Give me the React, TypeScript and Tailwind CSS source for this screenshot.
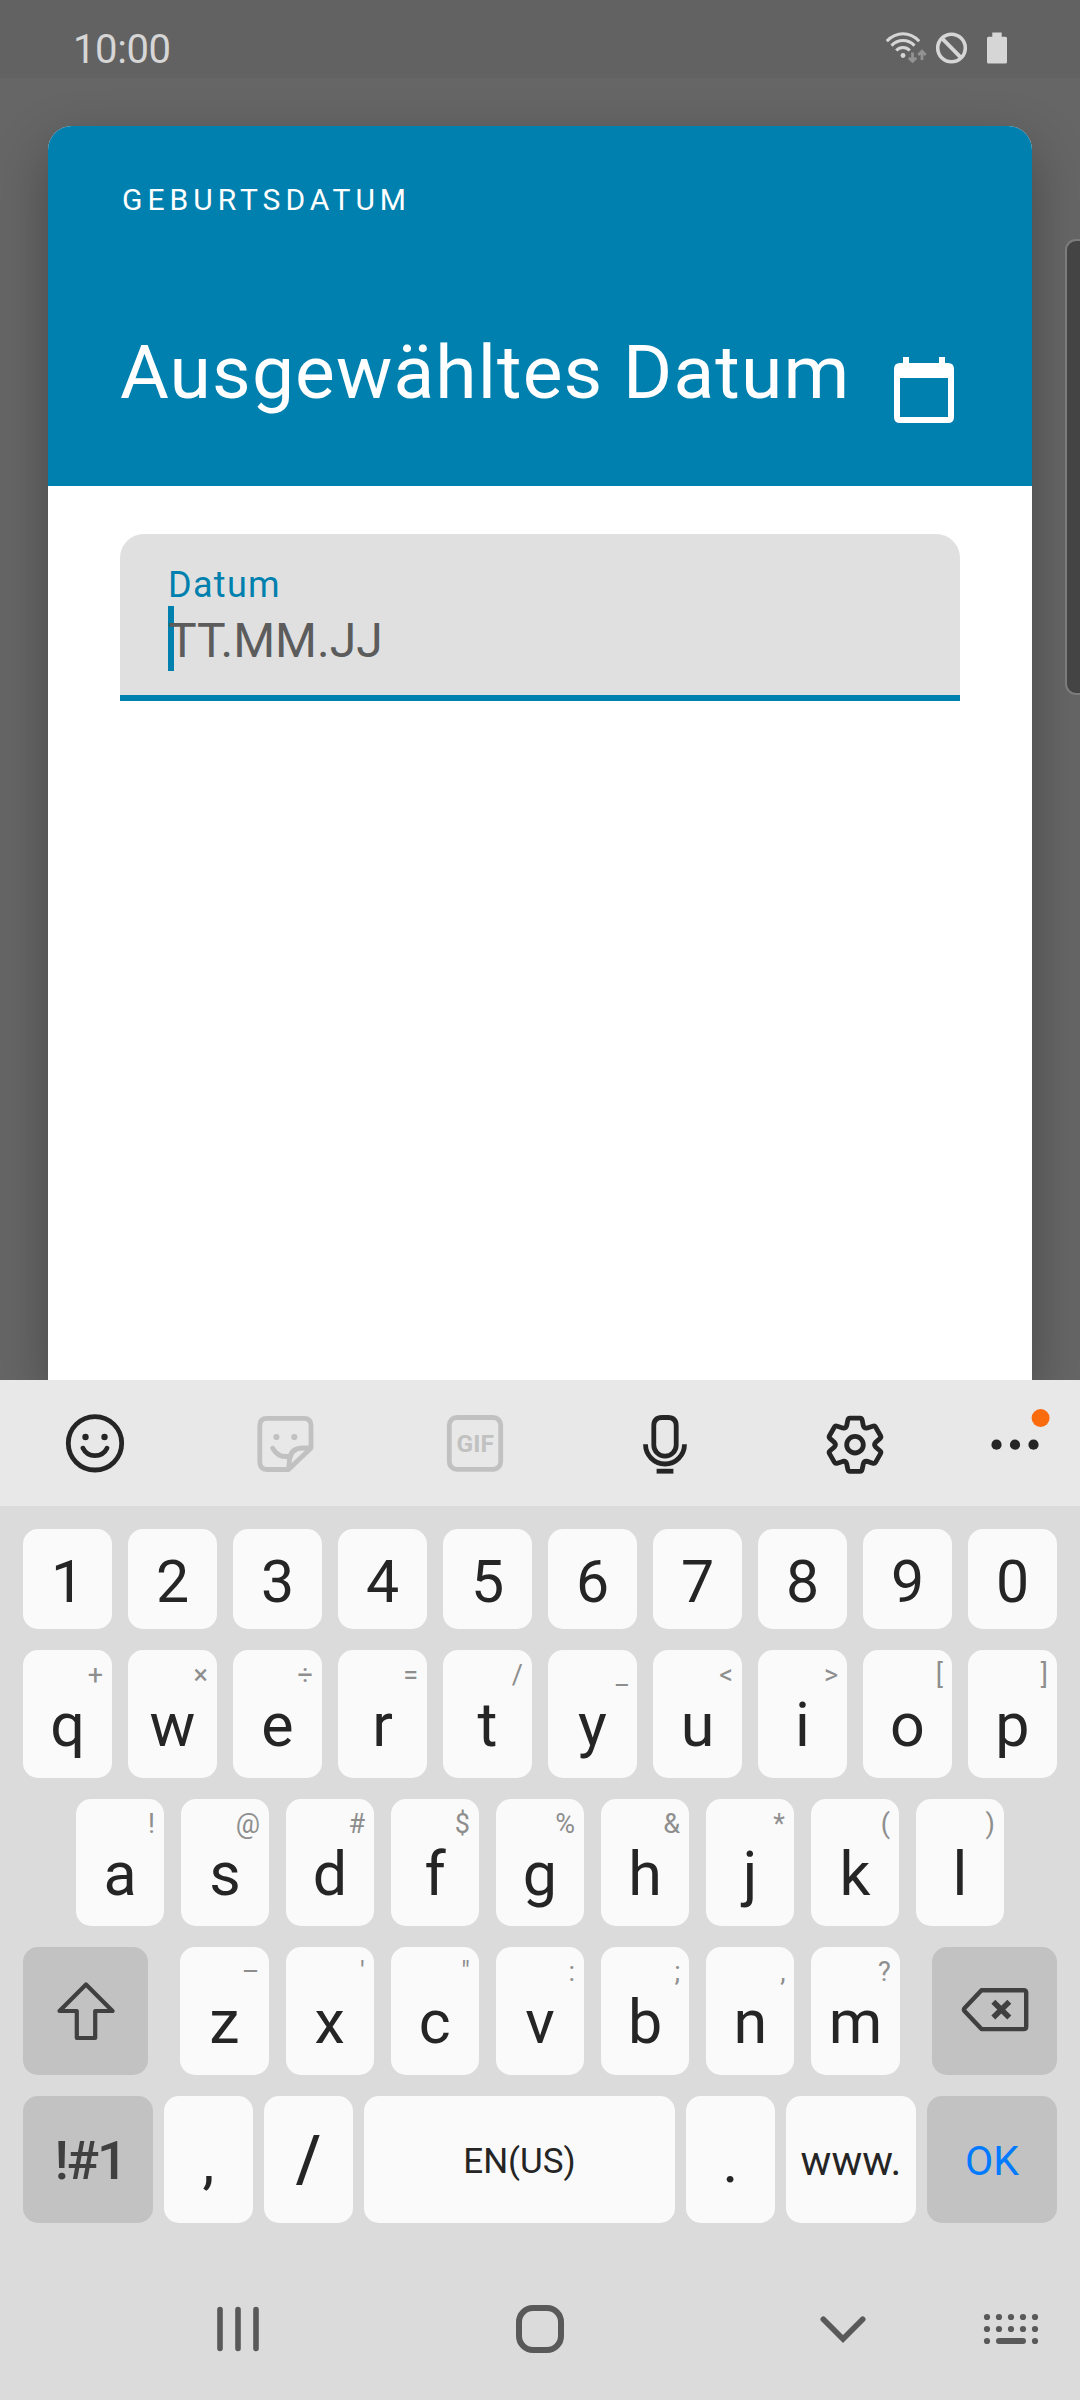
import type { ReactNode } from 'react';

const numberRow = ['1', '2', '3', '4', '5', '6', '7', '8', '9', '0'];
const topRow = [
  ['q', '+'], ['w', '×'], ['e', '÷'], ['r', '='], ['t', '/'],
  ['y', '_'], ['u', '<'], ['i', '>'], ['o', '['], ['p', ']'],
];
const homeRow = [
  ['a', '!'], ['s', '@'], ['d', '#'], ['f', '$'], ['g', '%'],
  ['h', '&'], ['j', '*'], ['k', '('], ['l', ')'],
];
const lowerRow = [
  ['z', '–'], ['x', "'"], ['c', '"'], ['v', ':'], ['b', ';'], ['n', ','], ['m', '?'],
];

// Icons are drawn around the origin so that they centre in their cell.
function Icon({ children, className = '' }: { children: ReactNode; className?: string }) {
  return (
    <svg
      width="80"
      height="80"
      viewBox="-40 -40 80 80"
      fill="none"
      stroke="currentColor"
      strokeWidth="4.8"
      strokeLinejoin="round"
      className={'shrink-0 ' + className}
    >
      {children}
    </svg>
  );
}

function gearPath() {
  const turn = (x: number, y: number, deg: number) => {
    const a = (deg * Math.PI) / 180;
    return `${(x * Math.cos(a) - y * Math.sin(a)).toFixed(2)} ${(x * Math.sin(a) + y * Math.cos(a)).toFixed(2)}`;
  };
  const teeth = [0, 60, 120, 180, 240, 300].map(
    (d) =>
      `L${turn(-7.2, -24.6, d)} Q${turn(-6.8, -26.6, d)} ${turn(-5, -26.6, d)} L${turn(5, -26.6, d)} Q${turn(6.8, -26.6, d)} ${turn(7.2, -24.6, d)} L${turn(8.3, -19, d)} Q${turn(9.3, -16.1, d)} ${turn(12.3, -16.7, d)}`,
  );
  return 'M' + teeth.join(' ').slice(1) + 'Z';
}

function LetterKey({ label, hint, width }: { label: string; hint: string; width: string }) {
  return (
    <div className={'flex h-full flex-col rounded-[15px] bg-[#fafafa] pt-[10px] ' + width}>
      <span className="h-[30px] pr-[9px] text-right text-[27px] leading-[30px] text-[#8e8e8e]">{hint}</span>
      <span className="mt-[5px] h-[60px] text-center text-[61px] leading-[60px] text-[#252525]">{label}</span>
    </div>
  );
}

function StatusBar() {
  return (
    <div className="flex h-[78px] items-start bg-[#626262] text-[#d6d6d6]">
      <span className="ml-[73px] mt-[20px] text-[40px] leading-[60px] tracking-[-0.4px]">10:00</span>
      <svg className="ml-auto mr-[73px] mt-[32px]" width="121" height="32" viewBox="886 32 121 32" fill="none" stroke="currentColor">
        <g strokeWidth="3">
          <path d="M886.8 41.2Q894 33.8 903 33.8T919.2 41.2" />
          <path d="M891.5 45.6Q896.5 40.6 903 40.6T914.5 45.6" />
          <path d="M896.2 50.6Q899 47.6 903 47.6T909.8 50.6" />
        </g>
        <circle cx="903" cy="55.5" r="2.4" fill="currentColor" stroke="none" />
        <g stroke="#929292" strokeWidth="2.8">
          <path d="M912.5 52.5V61M908.8 57.8L912.5 61.4L916.2 57.8M922 60V51.5M918.3 55L922 51.2L925.7 55" />
        </g>
        <circle cx="951.5" cy="48" r="13.8" strokeWidth="3.6" />
        <path d="M941.8 38.2L961.2 57.8" strokeWidth="3.8" />
        <path d="M992.3 32.4h9.4v4.4h3.8q1.5 0 1.5 1.5v23.7q0 1.5-1.5 1.5h-17q-1.500 0-1.500-1.500V38.300q0-1.500 1.500-1.500h3.800z" fill="currentColor" stroke="none" />
      </svg>
    </div>
  );
}

function DateDialog() {
  return (
    <div className="mx-[48px] mt-[48px] h-[1254px] rounded-t-[24px] bg-white shadow-[0_20px_54px_rgba(0,0,0,0.3)]">
      <div className="flex h-[360px] flex-col rounded-t-[24px] bg-[#0080ae] px-[72px] pt-[54px] text-white">
        <span className="ml-[2px] h-[40px] text-[30px] leading-[40px] tracking-[5px]">GEBURTSDATUM</span>
        <div className="mt-[102px] flex h-[100px] items-start justify-between">
          <span className="whitespace-nowrap text-[75px] leading-[100px] tracking-[1.100px]">Ausgewähltes Datum</span>
          <svg className="mr-[6px] mt-[35px]" width="60" height="66" viewBox="0 0 60 66" fill="white">
            <path fillRule="evenodd" d="M9 0H15V6H45V0H51V6H54Q60 6 60 12V60Q60 66 54 66H6Q0 66 0 60V12Q0 6 6 6H9ZM6 21V60H54V21Z" />
          </svg>
        </div>
      </div>
      <div className="mx-[72px] mt-[48px] flex h-[167px] flex-col rounded-t-[24px] border-b-[6px] border-[#0080ae] bg-[#e0e0e0] pl-[48px]">
        <span className="mt-[31px] h-[40px] text-[36px] leading-[40px] tracking-[1.300px] text-[#0080ae]">Datum</span>
        <div className="mt-[1px] flex h-[65px] w-[300px] border-l-[6px] border-[#0080ae]">
          <span className="-ml-[6px] mt-[3px] text-[48px] leading-[64px] text-[#5c5c5c]">TT.MM.JJ</span>
        </div>
      </div>
    </div>
  );
}

function Toolbar() {
  return (
    <div className="flex h-[126px] items-center bg-[#e8e8e8] text-[#252525]">
      <div className="flex w-[190px] justify-center">
        <Icon>
          <circle cx="0" cy="0.3" r="26.7" />
          <circle cx="-9.500" cy="-6" r="3.200" fill="currentColor" stroke="none" />
          <circle cx="9.500" cy="-6" r="3.200" fill="currentColor" stroke="none" />
          <path d="M-12 5.200A13.400 13.400 0 0 0 12 5.200" strokeLinecap="round" />
        </Icon>
      </div>
      <div className="flex w-[190px] justify-center">
        <Icon className="text-[#c1c1c1]">
          <path d="M26 5V-17.500Q26-24.700 19-24.700H-18Q-25.200-24.700-25.200-17.500V19Q-25.200 26.500-18 26.500H3.500L26 5H18Q5.500 5 4.500 17L3.500 26.500" />
          <circle cx="-8.600" cy="-6" r="3.100" fill="currentColor" stroke="none" />
          <circle cx="9.300" cy="-6" r="3.100" fill="currentColor" stroke="none" />
          <path d="M-12.300 5.200Q-7.500 13.500 0.500 13.500H5.500" strokeLinecap="round" />
        </Icon>
      </div>
      <div className="flex w-[190px] justify-center">
        <Icon className="text-[#c1c1c1]">
          <rect x="-25.700" y="-25.500" width="51.400" height="51.800" rx="7.500" />
          <text x="0.200" y="9.300" textAnchor="middle" fill="currentColor" stroke="none" fontSize="24.500" fontWeight="700">GIF</text>
        </Icon>
      </div>
      <div className="flex w-[190px] justify-center">
        <Icon>
          <path d="M-11.200-17.500Q-11.200-25.500-3-25.500H3Q11.200-25.500 11.200-17.500V2A11.200 11.200 0 0 1-11.200 2Z" />
          <path d="M-19.500 1.300A19.500 19.700 0 0 0 19.500 1.300" />
          <path d="M-8.400 28.200H8.400" />
        </Icon>
      </div>
      <div className="flex w-[190px] justify-center">
        <Icon>
          <g transform="translate(0 1.700)">
            <path d={gearPath()} />
            <circle r="8.300" />
          </g>
        </Icon>
      </div>
      <div className="flex flex-1 justify-center">
        <Icon>
          <g fill="currentColor" stroke="none">
            <circle cx="-18.500" cy="1.700" r="5.100" />
            <circle cx="0" cy="1.700" r="5.100" />
            <circle cx="18.500" cy="1.700" r="5.100" />
            <circle cx="25.600" cy="-25" r="9" fill="#f96b0c" />
          </g>
        </Icon>
      </div>
    </div>
  );
}

function Keyboard() {
  return (
    <div className="flex flex-col px-[23px] pt-[23px] text-[#252525]">
      <div className="flex h-[100px] gap-[16px]">
        {numberRow.map((n) => (
          <span key={n} className="w-[89px] rounded-[15px] bg-[#fafafa] pt-[23px] text-center text-[59px] leading-[60px]">
            {n}
          </span>
        ))}
      </div>
      <div className="mt-[21px] flex h-[128px] gap-[16px]">
        {topRow.map(([label, hint]) => (
          <LetterKey key={label} label={label} hint={hint} width="w-[89px]" />
        ))}
      </div>
      <div className="mt-[21px] flex h-[127px] gap-[17px] pl-[53px]">
        {homeRow.map(([label, hint]) => (
          <LetterKey key={label} label={label} hint={hint} width="w-[88px]" />
        ))}
      </div>
      <div className="mt-[21px] flex h-[128px] justify-between text-[#404040]">
        <div className="flex w-[125px] items-center justify-center rounded-[15px] bg-[#c2c2c2]">
          <Icon>
            <path d="M0-26.500L26.500 0H9.200V27H-9.200V0H-26.500Z" strokeWidth="4.200" />
          </Icon>
        </div>
        <div className="flex gap-[17px]">
          {lowerRow.map(([label, hint]) => (
            <LetterKey key={label} label={label} hint={hint} width="w-[88.200px]" />
          ))}
        </div>
        <div className="flex w-[125px] items-center justify-center rounded-[15px] bg-[#c2c2c2]">
          <Icon>
            <path d="M-13.500-20.700H28.700Q31.200-20.700 31.200-18.200V15.600Q31.200 18.100 28.700 18.100H-13.500L-30.300 0.300Q-31.800-1.300-30.300-2.900Z" strokeWidth="4.400" />
            <path d="M-1.700-9.200L14.300 6.600M14.300-9.200L-1.700 6.600" strokeWidth="5.600" />
          </Icon>
        </div>
      </div>
      <div className="mt-[21px] flex h-[127px] gap-[11px] text-center leading-[60px]">
        <span className="w-[130px] rounded-[15px] bg-[#c2c2c2] pl-[4px] pt-[35px] text-[54px] font-medium tracking-[-2.200px] text-[#404040]">!#1</span>
        <span className="w-[89px] rounded-[15px] bg-[#fafafa] pt-[36px] text-[60px]">,</span>
        <span className="w-[89px] rounded-[15px] bg-[#fafafa] pt-[34px] text-[64px] font-medium">/</span>
        <span className="w-[311px] rounded-[15px] bg-[#fafafa] pt-[36px] text-[35px]">EN(US)</span>
        <span className="w-[89px] rounded-[15px] bg-[#fafafa] pt-[36px] text-[60px]">.</span>
        <span className="w-[130px] rounded-[15px] bg-[#fafafa] pt-[35px] text-[41px]">www.</span>
        <span className="w-[130px] rounded-[15px] bg-[#c2c2c2] pt-[35px] text-[41px] text-[#007aff]">OK</span>
      </div>
    </div>
  );
}

function NavBar() {
  return (
    <div className="mt-[66px] flex h-[80px] items-center text-[#595959]">
      <Icon className="ml-[198px]">
        <path d="M-18-19.500V19.500M0-19.500V19.500M18-19.500V19.500" strokeWidth="5.600" strokeLinecap="round" />
      </Icon>
      <Icon className="ml-[222px]">
        <rect x="-21" y="-21" width="42" height="42" rx="14" strokeWidth="6" />
      </Icon>
      <Icon className="ml-[223px]">
        <path d="M-19.700-9.800L0 10L19.700-9.800" strokeWidth="5.600" strokeLinecap="round" strokeLinejoin="miter" />
      </Icon>
      <Icon className="ml-[88px]">
        <g fill="currentColor" stroke="none">
          {[-12, 0, 12].map((y) =>
            [-24, -12, 0, 12, 24].map((x) =>
              y === 12 && Math.abs(x) < 24 ? null : <circle key={`${x},${y}`} cx={x} cy={y} r="3.100" />,
            ),
          )}
          <rect x="-15" y="9" width="30" height="6" rx="3" />
        </g>
      </Icon>
    </div>
  );
}

export default function App() {
  return (
    <div className="relative h-[2400px] w-[1080px] overflow-hidden bg-[#666666] font-['Roboto',sans-serif]">
      <StatusBar />
      <DateDialog />
      <div className="absolute left-[1065px] top-[239px] h-[456px] w-[30px] rounded-[11px] border-2 border-[#7c7c7c] bg-[#444444]" />
      <div className="relative h-[1020px] bg-[#dbdbdb]">
        <Toolbar />
        <Keyboard />
        <NavBar />
      </div>
    </div>
  );
}
